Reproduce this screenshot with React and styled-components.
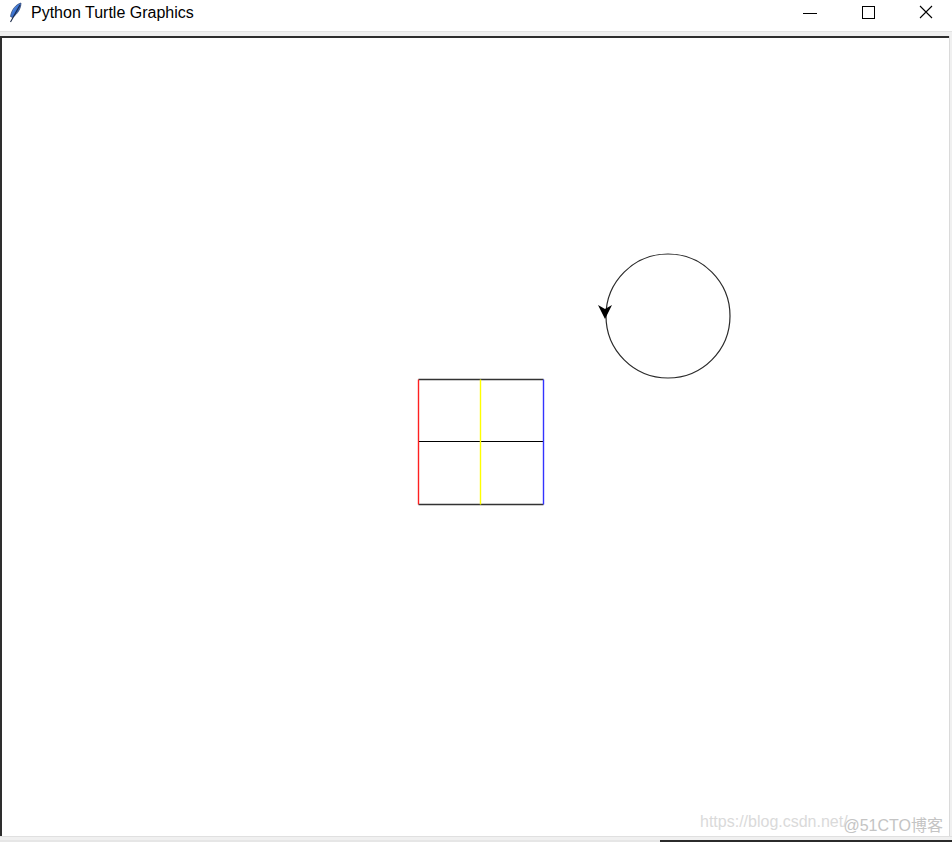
import React from "react";
import styled, { createGlobalStyle } from "styled-components";

const GlobalStyle = createGlobalStyle`
  html, body {
    margin: 0;
    padding: 0;
    background: #ffffff;
  }
  body {
    font-family: "Liberation Sans", Arial, sans-serif;
  }
`;

const square = { x: 416.5, y: 341.5, size: 125 };
const circle = { cx: 666, cy: 278, r: 62 };

const App = () => {
  const mid = square.size / 2;
  return (
    <>
      <GlobalStyle />
      <Window>
        <TitleBar>
          <TitleLeft>
            <Feather />
            <TitleText>Python Turtle Graphics</TitleText>
          </TitleLeft>
          <Controls>
            <CtrlButton aria-label="minimize">
              <svg width="16" height="16" viewBox="0 0 16 16">
                <line x1="1" y1="8.5" x2="15" y2="8.5" stroke="#000" strokeWidth="1" />
              </svg>
            </CtrlButton>
            <CtrlButton aria-label="maximize">
              <svg width="16" height="16" viewBox="0 0 16 16">
                <rect x="2.5" y="1.5" width="12" height="12" fill="none" stroke="#000" strokeWidth="1" />
              </svg>
            </CtrlButton>
            <CtrlButton aria-label="close">
              <svg width="16" height="16" viewBox="0 0 16 16">
                <path d="M2 1 L14 13 M14 1 L2 13" stroke="#000" strokeWidth="1.1" fill="none" />
              </svg>
            </CtrlButton>
          </Controls>
        </TitleBar>
        <Band />
        <Frame>
          <Canvas>
            <svg width="947" height="798" viewBox="0 0 947 798">
              {/* 正方形 */}
              <line x1={square.x} y1={square.y} x2={square.x + square.size} y2={square.y} stroke="#333" strokeWidth="1.3" />
              <line x1={square.x} y1={square.y + square.size} x2={square.x + square.size} y2={square.y + square.size} stroke="#333" strokeWidth="1.3" />
              <line x1={square.x} y1={square.y + mid - 0.5} x2={square.x + square.size} y2={square.y + mid - 0.5} stroke="#000" strokeWidth="1.2" />
              <line x1={square.x} y1={square.y} x2={square.x} y2={square.y + square.size} stroke="#ff2020" strokeWidth="1.4" />
              <line x1={square.x + mid - 0.5} y1={square.y} x2={square.x + mid - 0.5} y2={square.y + square.size} stroke="#ffff00" strokeWidth="1.4" />
              <line x1={square.x + square.size} y1={square.y} x2={square.x + square.size} y2={square.y + square.size} stroke="#3333ff" strokeWidth="1.4" />
              {/* 원 */}
              <circle cx={circle.cx} cy={circle.cy} r={circle.r} fill="none" stroke="#2a2a2a" strokeWidth="1.2" />
              {/* 거북이 */}
              <polygon points="603,281 596,267 603,271 610,267" fill="#000" />
            </svg>
            <Watermark>
              <Csdn>https://blog.csdn.net/</Csdn>
              <Cto>@51CTO博客</Cto>
            </Watermark>
          </Canvas>
          <RightEdge />
        </Frame>
        <BottomBand />
        <BottomStrip>
          <StripLight />
          <StripDark />
        </BottomStrip>
      </Window>
    </>
  );
};

const Feather = () => (
  <FeatherIcon width="14" height="22" viewBox="0 0 14 22">
    <defs>
      <linearGradient id="fg" x1="0" y1="0" x2="1" y2="1">
        <stop offset="0" stopColor="#9cc0f2" />
        <stop offset="0.45" stopColor="#3f78d6" />
        <stop offset="1" stopColor="#1c3c80" />
      </linearGradient>
    </defs>
    <path d="M13 1 C7.5 2.5 3.5 8 2.5 14.5 L4.5 15.5 C10 11.5 12.8 6.5 13 1 Z" fill="url(#fg)" stroke="#2a4270" strokeWidth="0.7" />
    <path d="M12 3 L2.5 20" stroke="#1b2a48" strokeWidth="1.1" />
  </FeatherIcon>
);

const Window = styled.div`
  width: 952px;
  height: 842px;
  display: flex;
  flex-direction: column;
  background: #ffffff;
  overflow: hidden;
`;

const TitleBar = styled.div`
  height: 31px;
  display: flex;
  align-items: center;
  justify-content: space-between;
  background: #ffffff;
`;

const TitleLeft = styled.div`
  display: flex;
  align-items: center;
  padding-left: 8px;
  gap: 9px;
  margin-top: -5px;
`;

const FeatherIcon = styled.svg`
  display: block;
`;

const TitleText = styled.span`
  font-family: "Liberation Sans", Arial, sans-serif;
  font-size: 16px;
  color: #000;
`;

const Controls = styled.div`
  display: flex;
  height: 100%;
  margin-right: -3px;
  margin-top: -5px;
`;

const CtrlButton = styled.div`
  width: 58px;
  display: flex;
  align-items: center;
  justify-content: center;
  svg {
    display: block;
  }
`;

const Band = styled.div`
  height: 5px;
  background: #f0f0f0;
  border-top: 1px solid #e3e3e3;
  box-sizing: border-box;
`;

const Frame = styled.div`
  display: flex;
  height: 800px;
`;

const Canvas = styled.div`
  position: relative;
  width: 947px;
  border-top: 2px solid #2e2e2e;
  border-left: 2px solid #2e2e2e;
  background: #ffffff;
  svg {
    display: block;
  }
`;

const RightEdge = styled.div`
  flex: 1;
  background: #f0f0f0;
  border-left: 1px solid #dadada;
`;

const Watermark = styled.div`
  position: absolute;
  right: 6px;
  bottom: 3px;
  width: 243px;
  height: 22px;
  font-family: "Liberation Sans", Arial, "Noto Sans CJK SC", sans-serif;
  font-size: 16px;
`;

const Csdn = styled.span`
  position: absolute;
  left: 0;
  top: 2px;
  color: #dadada;
`;

const Cto = styled.span`
  position: absolute;
  right: 0;
  top: 1px;
  color: #c4c4c4;
`;

const BottomBand = styled.div`
  height: 4px;
  background: #f0f0f0;
  border-top: 1px solid #e0e0e0;
  box-sizing: border-box;
`;

const BottomStrip = styled.div`
  flex: 1;
  display: flex;
`;

const StripLight = styled.div`
  width: 660px;
  background: #e6e6e6;
`;

const StripDark = styled.div`
  flex: 1;
  background: #2b2b2b;
`;

export default App;
